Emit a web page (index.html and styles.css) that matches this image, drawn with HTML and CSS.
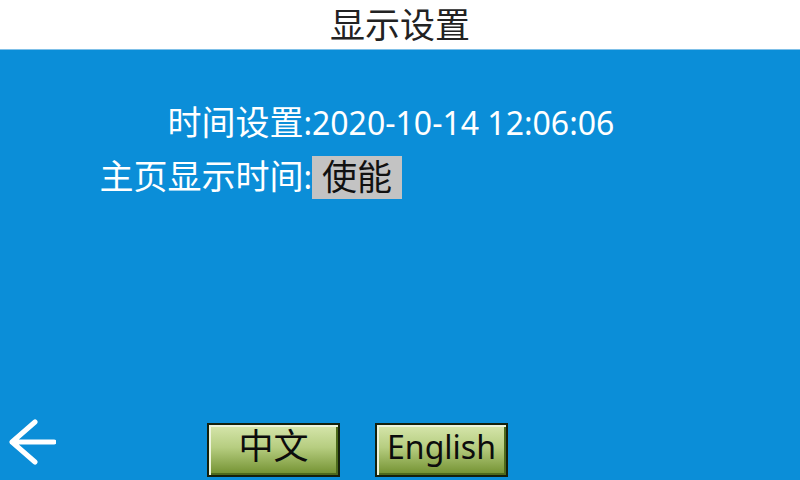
FILE: index.html
```html
<!DOCTYPE html>
<html lang="zh">
<head>
<meta charset="utf-8">
<title>显示设置</title>
<link rel="stylesheet" href="styles.css">
</head>
<body>
<div class="screen">
  <header class="topbar">显示设置</header>
  <main class="panel">
    <div class="settings">
      <div class="label"><span class="cjk">时间设置</span>:</div>
      <div class="value">2020-10-14 12:06:06</div>
      <div class="label"><span class="cjk">主页显示时间</span>:</div>
      <div class="value"><span class="toggle">使能</span></div>
    </div>
    <footer class="footer">
      <svg class="back" width="48" height="48" viewBox="0 0 48 48">
        <path d="M27 4 L4 24 L27 44 M4 24 L46 24" fill="none" stroke="#ffffff" stroke-width="5" stroke-linecap="round" stroke-linejoin="round"/>
      </svg>
      <button class="btn btn-zh"><span class="cjk">中文</span></button>
      <button class="btn btn-en">English</button>
    </footer>
  </main>
</div>
</body>
</html>
```
FILE: styles.css
```css
html, body {
  margin: 0;
  padding: 0;
}
body {
  width: 800px;
  height: 480px;
  overflow: hidden;
  font-family: "Noto Sans", "Noto Sans CJK SC", sans-serif;
}
.screen {
  width: 800px;
  height: 480px;
  display: flex;
  flex-direction: column;
}
.topbar {
  height: 49px;
  border-bottom: 1px solid #7fc0e8;
  background: #ffffff;
  color: #222222;
  font-size: 35px;
  line-height: 50px;
  text-align: center;
}
.panel {
  flex: 1;
  background: #0b8ed8;
  display: flex;
  flex-direction: column;
  padding-top: 52px;
}
.settings {
  display: grid;
  grid-template-columns: 312px auto;
  grid-auto-rows: 43px;
  row-gap: 11px;
  color: #ffffff;
  font-size: 32px;
  line-height: 41px;
}
.cjk {
  font-size: 34px;
}
.label {
  justify-self: end;
  white-space: nowrap;
}
.value {
  white-space: nowrap;
}
.toggle {
  display: inline-block;
  width: 90px;
  height: 43px;
  background: #c3c3c3;
  color: #111111;
  text-align: center;
  font-size: 35px;
  line-height: 42px;
}
.footer {
  margin-top: auto;
  display: flex;
  align-items: flex-start;
  padding: 0 0 3px 8px;
  height: 54px;
}
.back {
  margin-top: -5px;
  flex: none;
}
.btn {
  box-sizing: border-box;
  width: 133px;
  height: 54px;
  margin: 0;
  padding: 0 0 7px 0;
  border: 2px solid #14200c;
  background: linear-gradient(to bottom, #d6e6ac 0%, #b6cd80 45%, #71902f 100%);
  box-shadow: inset 2px 2px 0 #eef4dc, inset -2px -2px 0 #4d6a1c;
  color: #0c0c0c;
  font-family: "Noto Sans", "Noto Sans CJK SC", sans-serif;
  font-size: 32px;
  line-height: 40px;
  text-align: center;
}
.btn .cjk {
  font-size: 35px;
}
.btn-zh {
  margin-left: 151px;
}
.btn-en {
  margin-left: 35px;
}
```
